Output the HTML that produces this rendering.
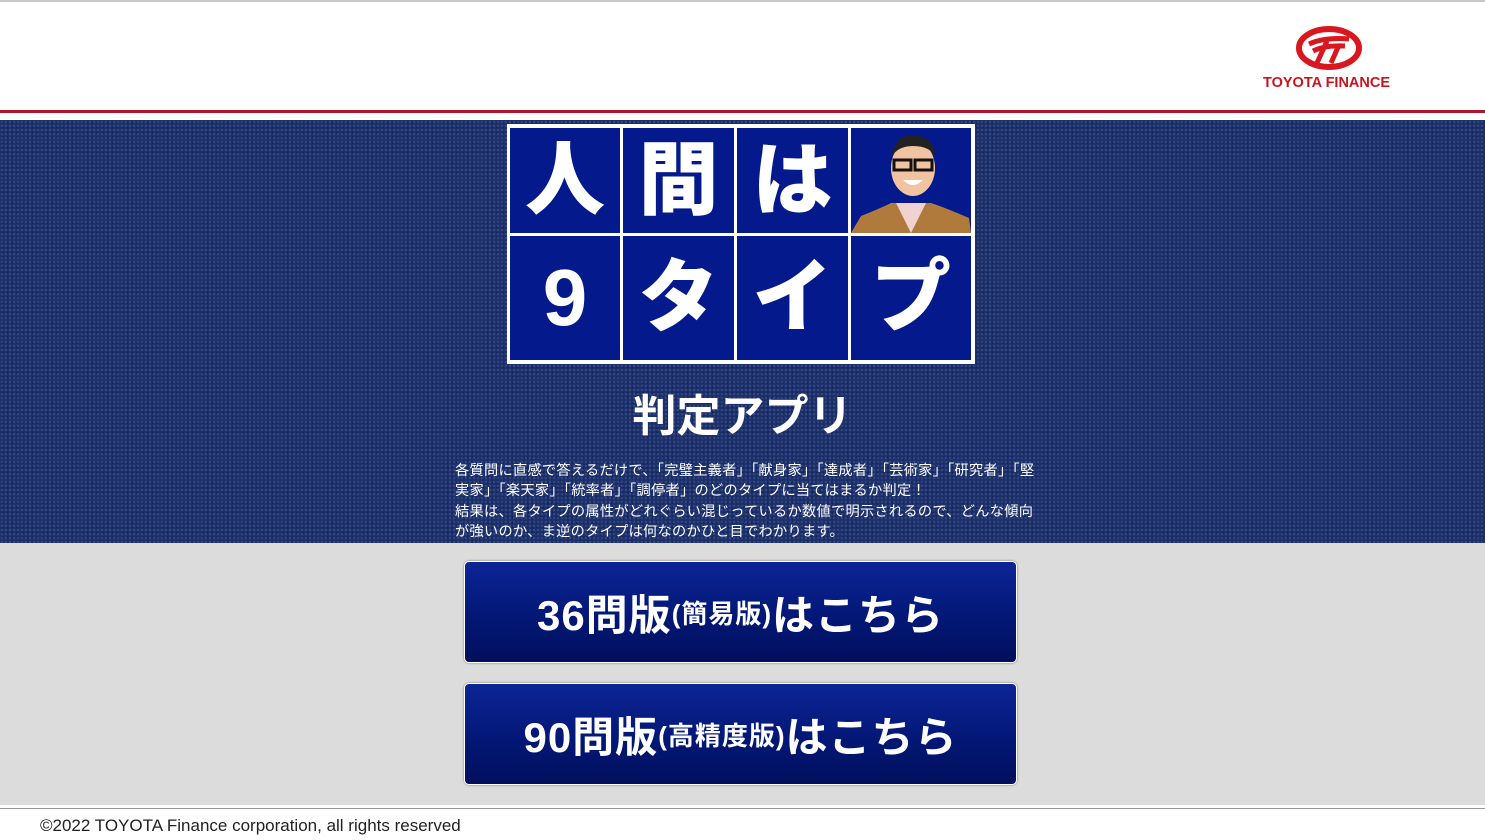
<!DOCTYPE html><html><head><meta charset="utf-8"><style>
body{margin:0;width:1485px;height:840px;position:relative;background:#fff;font-family:"Liberation Sans","Noto Sans CJK JP",sans-serif;overflow:hidden}
.a{position:absolute}
.cell{position:absolute;background:#041a8c;color:#fff;font-weight:900;font-size:80px;display:flex;align-items:center;justify-content:center;line-height:1}
.btn{position:absolute;left:464px;width:551px;height:100px;border-radius:5px;border:1px solid #fff;box-shadow:0 0 2px #777;background:linear-gradient(#0c2596,#021673 60%,#020f5c);color:#fff;font-weight:bold;display:flex;align-items:center;justify-content:center;font-size:42px;letter-spacing:1px}
.btn small{font-size:26px}
</style></head><body>
<div class="a" style="left:0;top:0;width:1485px;height:2px;background:#c8c8c8"></div>
<svg class="a" style="left:1295px;top:25px" width="68" height="46" viewBox="0 0 68 46"><ellipse cx="34" cy="23" rx="30" ry="19" fill="none" stroke="#d9171f" stroke-width="6"/><path d="M14 19 Q30 12 54 14 M18 26 Q30 20 50 21 M32 16 L22 38 M44 20 L36 38" stroke="#d9171f" stroke-width="5" fill="none"/></svg>
<div class="a" style="left:1263px;top:75px;font-size:14.5px;font-weight:bold;color:#c8151d">TOYOTA FINANCE</div>
<div class="a" style="left:0;top:110px;width:1485px;height:3px;background:#b3132a"></div>
<div class="a" style="left:0;top:120px;width:1485px;height:423px;background:#1a2f6e;background-image:radial-gradient(rgba(255,255,255,.12) 1px,transparent 1.5px),radial-gradient(rgba(0,0,0,.2) 1px,transparent 1.5px);background-size:4px 4px,5px 5px"></div>
<div class="a" style="left:507px;top:124px;width:468px;height:240px;background:#fff"></div>
<div class="cell" style="left:510px;top:128px;width:110px;height:105px">人</div>
<div class="cell" style="left:623px;top:128px;width:111px;height:105px">間</div>
<div class="cell" style="left:737px;top:128px;width:111px;height:105px">は</div>
<div class="cell" style="left:851px;top:128px;width:120px;height:105px;overflow:hidden">
<svg width="120" height="105"><path d="M0 105 L10 88 Q30 80 40 75 L80 75 Q95 80 118 90 L120 105Z" fill="#b07a3c"/><path d="M45 75 L60 105 L75 75Z" fill="#f0d2d0"/><ellipse cx="62" cy="40" rx="22" ry="28" fill="#f1c3a0"/><path d="M40 30 Q45 5 62 8 Q82 6 85 30 Q80 18 62 18 Q46 18 40 30Z" fill="#222"/><rect x="43" y="32" width="17" height="10" fill="none" stroke="#111" stroke-width="3"/><rect x="64" y="32" width="17" height="10" fill="none" stroke="#111" stroke-width="3"/><path d="M52 52 Q62 62 72 52Z" fill="#fff"/></svg></div>
<div class="cell" style="left:510px;top:236px;width:110px;height:124px">9</div>
<div class="cell" style="left:623px;top:236px;width:111px;height:124px">タ</div>
<div class="cell" style="left:737px;top:236px;width:111px;height:124px">イ</div>
<div class="cell" style="left:851px;top:236px;width:120px;height:124px">プ</div>
<div class="a" style="left:0;width:1485px;text-align:center;top:380px;color:#fff;font-size:44px;font-weight:bold">判定アプリ</div>
<div class="a" style="left:455px;top:461px;width:600px;white-space:nowrap;color:#fff;font-size:14.2px;line-height:20.3px;letter-spacing:0.3px">各質問に直感で答えるだけで、「完璧主義者」「献身家」「達成者」「芸術家」「研究者」「堅<br>実家」「楽天家」「統率者」「調停者」のどのタイプに当てはまるか判定！<br>結果は、各タイプの属性がどれぐらい混じっているか数値で明示されるので、どんな傾向<br>が強いのか、ま逆のタイプは何なのかひと目でわかります。</div>
<div class="a" style="left:0;top:543px;width:1485px;height:262px;background:#dcdcdc"></div>
<div class="btn" style="top:561px">36問版<small>(簡易版)</small>はこちら</div>
<div class="btn" style="top:683px">90問版<small>(高精度版)</small>はこちら</div>
<div class="a" style="left:0;top:808px;width:1485px;height:1px;background:#999"></div>
<div class="a" style="left:40px;top:816px;font-size:17px;color:#222">©2022 TOYOTA Finance corporation, all rights reserved</div>
</body></html>
